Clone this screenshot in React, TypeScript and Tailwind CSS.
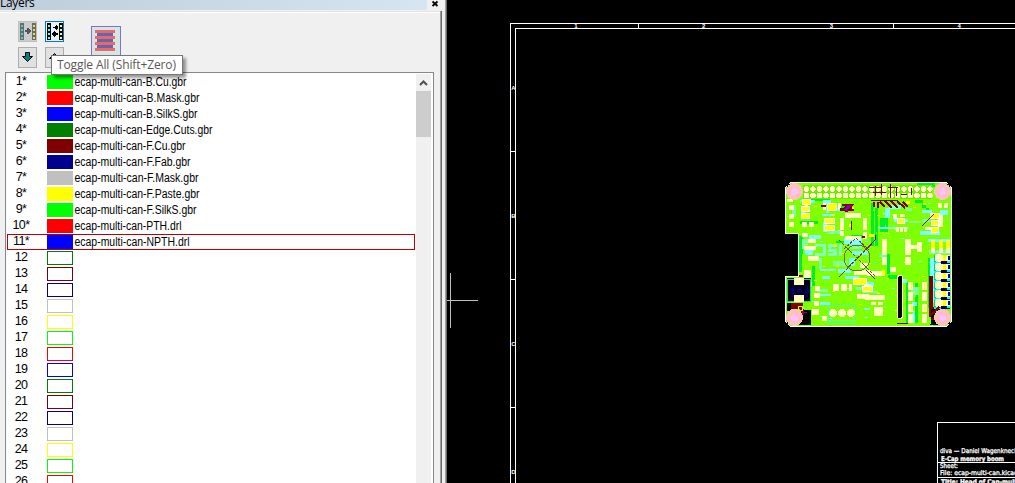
import React from 'react';

type Rect = [number, number, number, number];

interface Layer {
  id: number;
  color: string;
  file?: string;
  width?: number;
}

const palette = ['#0000ff', '#008000', '#800000', '#000090', '#c0c0c0', '#ffff00', '#00ff00', '#ff0000'];

const files: [string, number][] = [
  ['ecap-multi-can-B.Cu.gbr', 112],
  ['ecap-multi-can-B.Mask.gbr', 125],
  ['ecap-multi-can-B.SilkS.gbr', 123],
  ['ecap-multi-can-Edge.Cuts.gbr', 138],
  ['ecap-multi-can-F.Cu.gbr', 111],
  ['ecap-multi-can-F.Fab.gbr', 116],
  ['ecap-multi-can-F.Mask.gbr', 124],
  ['ecap-multi-can-F.Paste.gbr', 125],
  ['ecap-multi-can-F.SilkS.gbr', 122],
  ['ecap-multi-can-PTH.drl', 107],
  ['ecap-multi-can-NPTH.drl', 115],
];

const layers: Layer[] = Array.from({ length: 26 }, (_, i) => ({
  id: i + 1,
  color: i === 0 ? '#00ff00' : i === 1 ? '#ff0000' : palette[(i - 2) % 8],
  file: files[i]?.[0],
  width: files[i]?.[1],
}));

const LayerRow: React.FC<{ layer: Layer; selected: boolean }> = ({ layer, selected }) => (
  <div
    className={`flex h-4 w-[408px] shrink-0 items-center border ${selected ? 'border-[#c00000]' : 'border-transparent'}`}
  >
    <span className="-mt-[3px] w-[26px] text-center text-[12.5px] leading-4 tracking-[-0.6px]">
      {layer.id}
      {layer.file && '*'}
    </span>
    <span
      className="ml-[13px] h-[14px] w-[26px] shrink-0 border"
      style={{ borderColor: layer.color, backgroundColor: layer.file ? layer.color : '#fff' }}
    />
    {layer.file && (
      <svg className="ml-px h-4 w-[180px]">
        <text x="0.5" y="12" fontSize="12" textLength={layer.width} lengthAdjust="spacingAndGlyphs">
          {layer.file}
        </text>
      </svg>
    )}
  </div>
);

const FilmStrip: React.FC<{ both?: boolean }> = ({ both }) => (
  <svg width="17" height="19" shapeRendering="crispEdges">
    <path d="M1 1h4v17h-4zM13 1h4v17h-4z" fill={both ? '#000' : '#6a6a6a'} />
    {[3, 7, 11, 15].map((y) => (
      <g key={y}>
        <rect x="2" y={y} width="2" height="2" fill={both ? '#5ff' : '#3dd5d5'} />
        <rect x="14" y={y} width="2" height="2" fill={both ? '#ffff4a' : '#dede60'} />
      </g>
    ))}
    {both ? (
      <path d="M7 5h2v-1h1v-1h1v1h1v3h-1v1h-1v-1h-1v-1h-2zM12 11h-2v-1h-1v-1h-1v1h-1v1h-1v2h1v1h1v1h1v-1h1v-1h2z" fill="#000" />
    ) : (
      <path d="M6 8h2v-2h1l3 3-3 3h-1v-2h-2z" fill="#555" />
    )}
  </svg>
);

const ArrowButton: React.FC<{ up?: boolean }> = ({ up }) => (
  <button className="flex h-[21px] w-[19px] items-center justify-center border border-[#adadad] bg-[#e1e1e1]">
    <svg width="13" height="11" className={up ? 'rotate-180' : ''}>
      <path d="M4.500 .5h4v4h3l-5 5-5-5h3z" fill="#008080" stroke="#000" />
    </svg>
  </button>
);

const Toolbar: React.FC = () => (
  <div className="flex h-[59px] pl-[18px] pt-2">
    <div className="grid h-[47px] grid-cols-[19px_19px] grid-rows-[21px_21px] gap-x-2 gap-y-[5px]">
      <button className="flex h-[21px] w-[19px] items-center justify-center border border-[#bfbfbf] bg-[#cccccc]">
        <FilmStrip />
      </button>
      <button className="flex h-[21px] w-[19px] items-center justify-center border border-[#0078d7] bg-[#e5f1fb]">
        <FilmStrip both />
      </button>
      <ArrowButton />
      <ArrowButton up />
    </div>
    <svg width="30" height="32" className="ml-[27px] mt-[5px]" shapeRendering="crispEdges">
      <rect x=".5" y=".5" width="29" height="31" fill="#d5e5e5" stroke="#7777c5" />
      <rect x="6" y="5" width="16" height="19" fill="#6666ae" />
      {[4, 10, 16, 22].map((y) => (
        <rect key={y} x="4" y={y} width="20" height="3" fill="#e96868" />
      ))}
    </svg>
  </div>
);

const LayersPanel: React.FC = () => (
  <aside className="relative flex h-full w-[447px] shrink-0 bg-[#f0f0f0]">
    <div className="flex w-[440px] flex-col">
      <div className="flex h-[10px] shrink-0 overflow-hidden">
        <div className="w-[427px] bg-gradient-to-r from-[#bfcddb] to-[#d7e4f2] font-['Open_Sans',sans-serif] text-[12px] leading-[6px] tracking-[-0.3px]">
          Layers
        </div>
        <svg width="13" height="10">
          <path d="M5.500 1.500l5 4.500M10.500 1.500l-5 4.500" stroke="#000" strokeWidth="1.800" />
        </svg>
      </div>
      <div className="mt-[1px] h-0.5 shrink-0 border-b border-white bg-[#e3e3e3]" />
      <Toolbar />
      <div className="ml-[5px] flex w-[429px] flex-1 overflow-hidden border border-b-0 border-[#828790] bg-white">
        <div className="flex w-[410px] flex-col overflow-hidden pl-px pt-px">
          {layers.map((layer) => (
            <LayerRow key={layer.id} layer={layer} selected={layer.id === 11} />
          ))}
        </div>
        <div className="mt-[1px] flex w-[15px] flex-col bg-[#f0f0f0]">
          <svg width="15" height="17">
            <path d="M4 11l3.500-3.500 3.500 3.500" fill="none" stroke="#505050" strokeWidth="2" />
          </svg>
          <div className="h-[46px] bg-[#cdcdcd]" />
        </div>
      </div>
    </div>
    <div className="mt-[11px] w-0.5 border-l border-[#a0a0a0] bg-[#696969]" />
    <div className="ml-[3px] w-0.5 border-l border-[#a0a0a0] bg-[#696969]" />
    <div className="absolute left-[51px] top-[55px] flex h-5 w-[132px] items-center justify-center border border-[#767676] bg-white shadow-[3px_3px_3px_rgba(0,0,0,0.4)]">
      <svg width="120" height="18">
        <text x="0" y="13" fontSize="12" textLength="119" fill="#575757" className="font-['Open_Sans',sans-serif]">
          Toggle All (Shift+Zero)
        </text>
      </svg>
    </div>
  </aside>
);

const Rects: React.FC<{ fill: string; list: Rect[] }> = ({ fill, list }) => (
  <path fill={fill} d={list.map(([x, y, w, h]) => `M${x} ${y}h${w}v${h}h${-w}z`).join('')} />
);

const greenPour: Rect[] = [
  [804, 199, 26, 2], [800, 221, 18, 3], [840, 206, 8, 5], [871, 203, 3, 43], [875, 208, 3, 38], [880, 218, 8, 14],
  [917, 183, 18, 4], [915, 200, 8, 3], [922, 204, 4, 4], [926, 208, 3, 4], [887, 254, 3, 20], [799, 236, 4, 18],
  [888, 275, 9, 4], [906, 282, 2, 42], [915, 283, 3, 40], [799, 254, 3, 18], [812, 266, 3, 20], [928, 258, 3, 50],
  [836, 241, 20, 2], [830, 208, 10, 2], [851, 235, 14, 3],
];

const cyanSilk: Rect[] = [
  [800, 200, 15, 3], [792, 205, 4, 12], [801, 210, 4, 5], [823, 200, 8, 4], [826, 206, 3, 7], [822, 214, 13, 2],
  [823, 222, 4, 10], [827, 231, 15, 3], [835, 208, 6, 3], [809, 235, 12, 4], [802, 239, 6, 10], [805, 250, 8, 5],
  [844, 238, 18, 6], [850, 244, 12, 5], [852, 251, 16, 4], [849, 258, 6, 8], [833, 261, 14, 5], [838, 269, 13, 4],
  [845, 276, 14, 3], [819, 258, 3, 11], [820, 269, 16, 2], [822, 276, 8, 3], [817, 289, 11, 3], [820, 294, 11, 2],
  [820, 302, 10, 3], [855, 287, 10, 3], [857, 294, 10, 4], [866, 282, 8, 4], [863, 291, 15, 2], [885, 208, 5, 10],
  [889, 205, 12, 4], [906, 208, 6, 3], [894, 219, 14, 3], [878, 227, 30, 2], [909, 221, 12, 2], [922, 210, 10, 3],
  [940, 210, 8, 5], [922, 219, 8, 3], [920, 231, 20, 4], [928, 239, 22, 3], [929, 250, 22, 4], [930, 258, 4, 46],
  [903, 279, 4, 4], [911, 287, 8, 8], [912, 302, 5, 4], [912, 311, 3, 12], [879, 254, 7, 3], [864, 308, 6, 2],
];

// mirrored lettering on the bottom silkscreen
const bigSilk: Rect[] = [
  [815, 244, 11, 3], [823, 244, 3, 12], [815, 253, 11, 3], [828, 244, 9, 3], [828, 244, 3, 6], [828, 249, 9, 3],
  [834, 249, 3, 7], [828, 253, 9, 3], [839, 244, 3, 12],
];

const creamPads: Rect[] = [
  [789, 205, 5, 5], [789, 214, 5, 5], [789, 222, 5, 5], [802, 222, 5, 5], [809, 222, 5, 5], [787, 199, 6, 3],
  [845, 213, 16, 5], [845, 236, 16, 4], [840, 218, 4, 12], [863, 218, 4, 12], [840, 231, 4, 5], [863, 232, 4, 7],
  [823, 203, 3, 7], [838, 203, 3, 6], [802, 233, 6, 4], [808, 239, 8, 4], [804, 246, 12, 4], [808, 256, 11, 5],
  [804, 270, 7, 8], [815, 286, 5, 5], [814, 293, 6, 5], [814, 301, 5, 5], [812, 309, 7, 6], [833, 284, 6, 7],
  [841, 284, 6, 7], [849, 284, 3, 7], [854, 270, 16, 5], [860, 263, 8, 5], [864, 284, 7, 7], [857, 294, 12, 5],
  [867, 271, 18, 5], [882, 239, 5, 16], [905, 239, 6, 16], [890, 267, 6, 5], [896, 227, 3, 5], [900, 227, 3, 5],
  [904, 227, 3, 5], [893, 214, 4, 5], [900, 214, 5, 3], [917, 242, 5, 10], [911, 245, 6, 4], [938, 203, 4, 5],
  [944, 203, 4, 5], [938, 215, 5, 12], [925, 227, 10, 3], [931, 240, 4, 13], [939, 240, 4, 13], [946, 240, 4, 13],
  [871, 302, 5, 3], [878, 302, 5, 3], [874, 307, 9, 9], [865, 295, 20, 5], [808, 282, 4, 4], [822, 316, 5, 5],
  [882, 257, 5, 8], [905, 257, 6, 8], [908, 282, 5, 8], [908, 292, 5, 9], [908, 304, 5, 8], [908, 314, 5, 9],
  [922, 282, 5, 8], [922, 292, 5, 9], [922, 304, 5, 8], [922, 314, 5, 9],
];

const yellowPads: Rect[] = [
  [803, 200, 7, 4], [802, 207, 7, 4], [802, 214, 7, 4], [825, 219, 9, 4], [825, 226, 9, 4], [828, 204, 8, 6],
  [854, 279, 12, 5], [863, 287, 9, 4], [898, 219, 6, 4], [931, 214, 8, 4], [932, 221, 6, 4], [932, 228, 6, 4],
  [931, 241, 4, 7], [939, 241, 4, 7], [946, 241, 4, 7], [882, 270, 3, 5], [849, 224, 2, 3], [852, 207, 2, 2],
  [869, 234, 5, 3], [906, 201, 4, 3], [923, 203, 3, 2], [833, 244, 3, 2], [836, 265, 3, 2], [911, 283, 1, 6],
  [924, 283, 1, 6], [911, 305, 1, 6], [924, 305, 1, 6],
];

const maroonBits: Rect[] = [
  [821, 205, 5, 2], [840, 208, 14, 3], [842, 204, 9, 2], [869, 187, 12, 1], [873, 192, 13, 1], [888, 187, 10, 1],
  [881, 184, 1, 11], [890, 184, 1, 14], [896, 188, 1, 8], [875, 186, 1, 10], [901, 194, 6, 1], [911, 188, 1, 7],
  [851, 221, 1, 9], [862, 236, 3, 2], [929, 276, 4, 32], [929, 307, 6, 8], [897, 323, 11, 1], [799, 275, 4, 2],
  [871, 200, 27, 1], [873, 202, 2, 5], [877, 202, 2, 6],
];

const speckle: Rect[] = Array.from({ length: 240 }, (_, i) => [
  801 + ((i * 47) % 144),
  201 + ((i * 71 + ((i * i) % 13)) % 118),
  1 + (i % 3),
  1 + (i % 3 === 0 ? 1 : 0),
]);

const Board: React.FC = () => (
  <g>
    <path
      d="M785.500 187.500l5-5h156l5 5v134l-5 5h-156l-5-5v-45h13v-43h-13z"
      fill="#80ff00"
      stroke="#fff"
    />
    <Rects fill="#00f028" list={greenPour} />
    <Rects fill="#80ffa0" list={cyanSilk} />
    <Rects fill="#80ffff" list={cyanSilk.filter((_, i) => i % 3 !== 1)} />
    <Rects fill="#80ffc8" list={bigSilk} />
    <Rects fill="#80ff00" list={speckle.filter((_, i) => i % 3 === 0)} />
    <Rects fill="#50ff90" list={speckle.filter((_, i) => i % 3 === 1)} />
    <Rects fill="#ffff00" list={speckle.filter((_, i) => i % 9 === 2)} />
    <Rects fill="#80ffff" list={speckle.filter((_, i) => i % 9 === 5)} />
    <Rects fill="#ffffc0" list={creamPads} />
    <path d="M803 185h129v14h-129z" fill="#65f000" />
    {Array.from({ length: 20 }, (_, i) => (
      <g key={i} fill="#ffffc0">
        <circle cx={806.5 + i * 6.5} cy="189" r="2.700" />
        <circle cx={806.5 + i * 6.5} cy="195.500" r="2.700" />
      </g>
    ))}
    <Rects fill="#800000" list={maroonBits} />
    <path d="M880 202l5 5M885 201l7 7M891 201l7 7M897 201l8 7M903 202l5 5" stroke="#800000" strokeWidth="2" />
    <path d="M843 210l5-6h6l-7 8z" fill="#8000c0" stroke="#800000" />
    <Rects fill="#ffffff" list={yellowPads.slice(0, 12).map(([x, y, w, h]): Rect => [x - 1, y - 1, w + 2, h + 2])} />
    <Rects fill="#ffff00" list={yellowPads} />
    <circle cx="857" cy="258" r="13" fill="none" stroke="#607040" />
    <path d="M839 240l36 36M876 239l-37 38M844 249l12-11 13 12" fill="none" stroke="#704040" strokeDasharray="3 1" />
    <path d="M866 250l9-10v-5M922 226l12-12M866 270l9 9" fill="none" stroke="#900080" />

    <path d="M787 278h24v23h-24zM787 303h4v8h-4zM805 310h6v15h-14v-8z" fill="#000" />
    <path d="M787.500 279.500h23v22h-23z" fill="#000018" stroke="#00e880" />
    <Rects fill="#ffffc0" list={[[794, 278, 10, 7], [794, 295, 10, 7]]} />
    <path d="M790 289h3v3h-3zM797 289h4v3h-4zM805 289h3v3h-3zM792 286v11M807 286v11" fill="none" stroke="#000090" />
    <Rects fill="#800000" list={[[791, 303, 12, 6], [800, 309, 4, 6]]} />
    <path d="M798.500 306.500h4v4h-4z" fill="none" stroke="#d0ff00" />
    <path d="M799 312.500h8M802.500 311v9" stroke="#900050" />
    <path d="M828.500 305.500h26v18h-26zM828.500 320.500h26" fill="none" stroke="#50ffa0" />
    {[833, 842, 851].map((x) => (
      <circle key={x} cx={x} cy="313" r="4" fill="#ffffc0" />
    ))}
    <rect x="897.500" y="275.500" width="5" height="43" rx="2.500" fill="#000" stroke="#ffffc0" />

    <Rects fill="#00d080" list={[[934, 255, 16, 53]]} />
    {Array.from({ length: 6 }, (_, i) => (
      <g key={i}>
        <path d={`M941 ${261 + i * 9}h9v3h-9z`} fill="#000060" />
        <path d={`M934 ${262 + i * 9}h6v2h-6zM947 ${261 + i * 9}h3v2h-3z`} fill="#00ffff" />
        <circle cx="938.500" cy={258 + i * 9} r="4" fill="#ffffc0" />
        <path d={`M942 ${255 + i * 9}h8v6h-8z`} fill="#ffffc0" />
        <path d={`M943 ${255 + i * 9}h3v6h-3z`} fill="#ffff00" />
        <path d={`M948 ${256 + i * 9}h2v4h-2z`} fill="#0000d0" />
      </g>
    ))}
    <path d="M916 324h15v-15h6l11 2v12l-4 2z" fill="#000" />
    <path d="M929 317l10-10M932 320l8-9" stroke="#800000" strokeWidth="2" />
    <path d="M787 184h4l-4 5zM946 184h4v5zM787 324v-6l5 7zM950 318v6h-6z" fill="#000" />
    {[[794.5, 191.5], [942.5, 191.5], [794.5, 317.5], [942.5, 317.5]].map(([cx, cy]) => (
      <g key={`${cx}-${cy}`}>
        <circle cx={cx} cy={cy} r="8.500" fill="#ffc0c0" />
        <circle cx={cx} cy={cy} r="3.500" fill="#ffc0ff" />
      </g>
    ))}
  </g>
);

const Viewer: React.FC = () => (
  <main className="h-full flex-1 bg-black">
    <svg width="568" height="483" viewBox="447 0 568 483" shapeRendering="crispEdges">
      <path
        d="M1015 23.500H510.500V483M1015 28.500H515.500V483M638.500 24v4M893.500 24v4M511 151.500h4M511 279.500h4M511 407.500h4"
        fill="none"
        stroke="#fff"
      />
      <g fill="#fff" fontSize="6" fontWeight="bold" textAnchor="middle">
        {['1', '2', '3', '4'].map((n, i) => (
          <text key={n} x={576 + i * 127.7} y="28">{n}</text>
        ))}
        {['A', 'B', 'C', 'D'].map((n, i) => (
          <text key={n} x="513.500" y={90 + i * 128}>{n}</text>
        ))}
      </g>
      <path d="M450.500 273v55M447 300.500h31" stroke="#c0c0c0" />
      <Board />
      <path d="M1015 422.500H937.500V483M937 462.500h78M937 477.500h78" fill="none" stroke="#fff" />
      <g fill="#fff" fontSize="6.500" stroke="#fff" strokeWidth=".3" className="font-['DejaVu_Sans',sans-serif]">
        <text x="940" y="453" textLength="80" lengthAdjust="spacingAndGlyphs">diva — Daniel Wagenknecht</text>
        <text x="941" y="460.500" fontWeight="bold" textLength="63" lengthAdjust="spacingAndGlyphs">E-Cap memory boom</text>
        <text x="940" y="468" textLength="18" lengthAdjust="spacingAndGlyphs">Sheet:</text>
        <text x="940" y="475" textLength="92" lengthAdjust="spacingAndGlyphs">File: ecap-multi-can.kicad_pcb</text>
        <text x="941" y="484" fontWeight="bold" textLength="78" lengthAdjust="spacingAndGlyphs">Title: Head of Cap-multi</text>
      </g>
    </svg>
  </main>
);

export default function App() {
  return (
    <div className="flex h-[483px] w-[1015px] overflow-hidden bg-black font-['Liberation_Sans',Arial,sans-serif] text-black">
      <LayersPanel />
      <Viewer />
    </div>
  );
}
